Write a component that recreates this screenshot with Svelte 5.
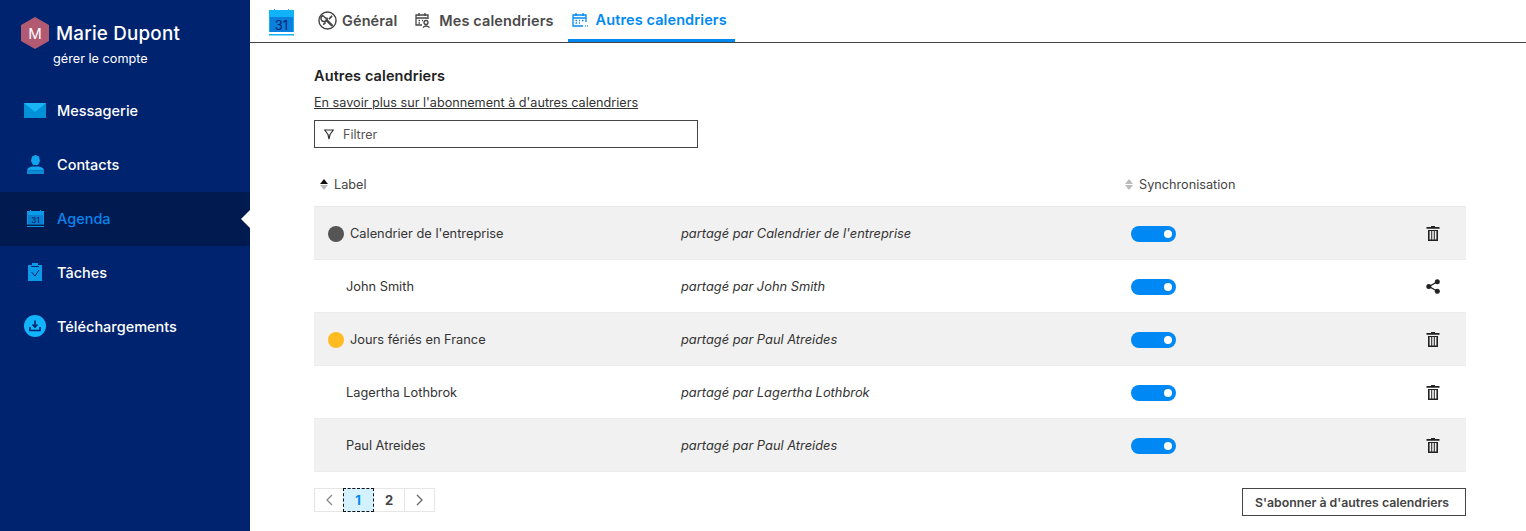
<script>
	const nav = [
		{ id: 'mail', label: 'Messagerie' },
		{ id: 'contacts', label: 'Contacts' },
		{ id: 'agenda', label: 'Agenda', active: true },
		{ id: 'tasks', label: 'Tâches' },
		{ id: 'downloads', label: 'Téléchargements' }
	];

	const rows = [
		{ name: "Calendrier de l'entreprise", owner: "Calendrier de l'entreprise", color: '#555555', action: 'trash' },
		{ name: 'John Smith', owner: 'John Smith', action: 'share' },
		{ name: 'Jours fériés en France', owner: 'Paul Atreides', color: '#ffbb22', action: 'trash' },
		{ name: 'Lagertha Lothbrok', owner: 'Lagertha Lothbrok', action: 'trash' },
		{ name: 'Paul Atreides', owner: 'Paul Atreides', action: 'trash' }
	];
</script>

<div class="page">
	<aside class="sidebar">
		<div class="account">
			<div class="who">
				<svg class="hex" width="28" height="32" viewBox="0 0 28 32">
					<path d="M14 0 L28 8 V24 L14 32 L0 24 V8 Z" fill="#b15a72" />
					<text x="14" y="21.500" text-anchor="middle" font-size="15" fill="#fff">M</text>
				</svg>
				<span class="name">Marie Dupont</span>
			</div>
			<div class="manage">gérer le compte</div>
		</div>
		<nav>
			{#each nav as item}
				<div class="nav-item" class:active={item.active}>
					<span class="nav-icon">
						{#if item.id === 'mail'}
							<svg width="22" height="15" viewBox="0 0 22 15">
								<path d="M0 0 H22 V15 H0 Z" fill="#0091d8" />
								<path d="M0 0 H22 L11 9 Z" fill="#19b5f5" />
							</svg>
						{:else if item.id === 'contacts'}
							<svg width="17" height="19" viewBox="0 0 17 19">
								<path d="M5 1.500 L8.500 0 L12 1.500 L13 6 L11 10 H6 L4 6 Z" fill="#12a5ee" />
								<path d="M0 15.500 Q0 12.500 5 11.500 H12 Q17 12.500 17 15.500 Z" fill="#12a5ee" />
								<path d="M0 15.500 H17 V19 H0 Z" fill="#0b8ad6" />
							</svg>
						{:else if item.id === 'agenda'}
							<svg width="17" height="17" viewBox="0 0 17 17">
								<path d="M0 1 H3 V0 H4 V1 H13 V0 H14 V1 H17 V14.500 H0 Z" fill="#0a9ae8" />
								<rect y="16" width="17" height="1" fill="#0a9ae8" />
								<rect x="1" y="5" width="15" height="9" fill="#0a7fd0" />
								<text x="8.500" y="13" text-anchor="middle" font-size="8" fill="#00236f">31</text>
							</svg>
						{:else if item.id === 'tasks'}
							<svg width="14" height="18" viewBox="0 0 14 18">
								<path d="M0 2 H4 V0 H10 V2 H14 V18 H0 Z" fill="#0a9ae8" />
								<path d="M3.500 9 L7 13 L11 7" fill="none" stroke="#00236f" stroke-width="1" />
								<rect x="3" y="3" width="8" height="1" fill="#00236f" />
							</svg>
						{:else}
							<svg width="22" height="22" viewBox="0 0 22 22">
								<circle cx="11" cy="11" r="11" fill="#12b5fb" />
								<path d="M11 5.500 V12 M8.500 9.500 L11 12 L13.500 9.500" fill="none" stroke="#00236f" stroke-width="1.600" />
								<path d="M6 12 V15.500 H16 V12" fill="none" stroke="#00236f" stroke-width="1.600" />
							</svg>
						{/if}
					</span>
					<span>{item.label}</span>
				</div>
			{/each}
		</nav>
	</aside>

	<main class="main">
		<header class="tabs">
			<svg class="logo" width="25" height="27" viewBox="0 0 25 27">
				<path d="M0 1 H5 V0 H6 V1 H19 V0 H20 V1 H25 V23 H0 Z" fill="#10b2f8" />
				<rect y="25" width="25" height="1.500" fill="#10b2f8" />
				<rect x="1" y="8" width="23" height="15" fill="#0a80dc" />
				<text x="12.500" y="21" text-anchor="middle" font-size="13" fill="#00236f">31</text>
			</svg>
			<div class="tab general">
				<svg width="19" height="19" viewBox="0 0 20 20" fill="none" stroke="#444" stroke-width="1.500">
					<circle cx="10" cy="10" r="9" />
					<path d="M5 4.800 A3.300 3.300 0 1 0 9.700 7.700 L8 7.500 L7 6.500 Z" stroke-linejoin="round" />
					<path d="M9 9.500 L14.500 15" stroke-width="2.600" stroke-linecap="round" />
					<path d="M14.800 5.200 L11.500 8.500 M5.500 14.500 L8 12" stroke-width="1.700" />
				</svg>
				Général
			</div>
			<div class="tab mine">
				<svg width="16" height="16" viewBox="0 0 16 16" fill="none" stroke="#444" stroke-width="1.300">
					<path d="M7 13 H1 V3 H13 V7 M1 6 H13 M4 1 V4 M10 1 V4" />
					<path d="M3.500 8.500 H5 M7 8.500 H8 M3.500 11 H5" />
					<circle cx="11" cy="10.500" r="2" />
					<path d="M8 15.500 Q11 12.500 14.500 15.500" />
				</svg>
				Mes calendriers
			</div>
			<div class="tab current">
				<svg width="16" height="16" viewBox="0 0 16 16" fill="none" stroke="#0089f0" stroke-width="1.300">
					<path d="M11 14 H1 V3 H14 V10 M1 6 H14 M4 1 V4 M11 1 V4" />
					<path d="M3.500 8.500 H5 M7 8.500 H8 M10 8.500 H11.500 M3.500 11 H5 M7 11 H8" />
					<path d="M13 14 H13.800 M15 14 H15.800" />
				</svg>
				Autres calendriers
			</div>
		</header>

		<section class="content">
			<h2>Autres calendriers</h2>
			<a class="learn" href="#top">En savoir plus sur l'abonnement à d'autres calendriers</a>
			<div class="filter">
				<svg width="10" height="11" viewBox="0 0 10 11" fill="none" stroke="#333" stroke-width="1.200">
					<path d="M0.700 1 H9.300 L6 5.500 L5 10 L4 5.500 Z" />
				</svg>
				<span>Filtrer</span>
			</div>

			<div class="table-head">
				<div class="col-label">
					<svg width="8" height="11" viewBox="0 0 8 11">
						<path d="M4 0 L8 5 H0 Z" fill="#111" />
						<path d="M4 11 L8 6 H0 Z" fill="#bbb" />
					</svg>
					Label
				</div>
				<div class="col-sync">
					<svg width="8" height="11" viewBox="0 0 8 11">
						<path d="M4 0 L8 5 H0 Z" fill="#bbb" />
						<path d="M4 11 L8 6 H0 Z" fill="#bbb" />
					</svg>
					Synchronisation
				</div>
			</div>

			{#each rows as row}
				<div class="row">
					<div class="cell-name" class:dotted={row.color}>
						{#if row.color}
							<span class="dot" style="background: {row.color}"></span>
						{/if}
						{row.name}
					</div>
					<div class="cell-owner">partagé par {row.owner}</div>
					<div class="cell-sync"><span class="toggle"></span></div>
					<div class="cell-action">
						{#if row.action === 'trash'}
							<svg width="14" height="15" viewBox="0 0 14 15">
								<path d="M5 1 V0 H9 V1 H13.500 V2.800 H0.500 V1 Z" fill="#222" />
								<path d="M2 4 H12 V15 H2 Z M3.600 5 V13.500 H5.200 V5 Z M6.200 5 V13.500 H7.800 V5 Z M8.800 5 V13.500 H10.400 V5 Z" fill="#222" fill-rule="evenodd" />
							</svg>
						{:else}
							<svg width="14" height="15" viewBox="0 0 14 15">
								<path d="M11 3 L3 7.500 L11 12" fill="none" stroke="#222" stroke-width="1.400" />
								<circle cx="11.300" cy="2.800" r="2.500" fill="#222" />
								<circle cx="2.800" cy="7.500" r="2.500" fill="#222" />
								<circle cx="11.300" cy="12.200" r="2.500" fill="#222" />
							</svg>
						{/if}
					</div>
				</div>
			{/each}

			<div class="foot">
				<div class="pager">
					<span class="page-btn arrow">
						<svg width="8" height="12" viewBox="0 0 8 12" fill="none" stroke="#888" stroke-width="1.300"><path d="M7 1 L2 6 L7 11" /></svg>
					</span>
					<span class="page-btn selected">1</span>
					<span class="page-btn two">2</span>
					<span class="page-btn arrow last">
						<svg width="8" height="12" viewBox="0 0 8 12" fill="none" stroke="#666" stroke-width="1.300"><path d="M1 1 L6 6 L1 11" /></svg>
					</span>
				</div>
				<button type="button">S'abonner à d'autres calendriers</button>
			</div>
		</section>
	</main>
</div>

<style>
	:global(body) {
		margin: 0;
		background: #fff;
	}
	.page {
		display: flex;
		height: 531px;
		overflow: hidden;
		font-family: Inter, "Open Sans", sans-serif;
		color: #333;
	}
	.sidebar {
		width: 250px;
		flex: none;
		background: #00236f;
		color: #fff;
	}
	.account {
		padding: 17px 0 0 21px;
		height: 67px;
	}
	.who {
		display: flex;
		align-items: center;
		gap: 7px;
	}
	.hex {
		flex: none;
	}
	.hex text {
		font-family: Inter, sans-serif;
	}
	.name {
		font-size: 18.800px;
		font-weight: 500;
		letter-spacing: 0.2px;
	}
	.manage {
		font-size: 12.700px;
		margin: 2px 0 0 32px;
	}
	.nav-item {
		display: flex;
		align-items: center;
		height: 54px;
		box-sizing: border-box;
		padding-bottom: 2px;
		font-size: 14.500px;
		font-weight: 500;
		position: relative;
	}
	.nav-icon {
		width: 22px;
		margin: 0 11px 0 24px;
		display: flex;
		justify-content: center;
		flex: none;
	}
	.nav-icon svg {
		display: block;
	}
	.nav-item.active {
		background: #011a4f;
		color: #0a85ee;
	}
	.nav-item.active::after {
		content: '';
		position: absolute;
		right: 0;
		top: 50%;
		margin-top: -9px;
		border: 9px solid transparent;
		border-right-color: #fff;
		border-left-width: 0;
	}
	.main {
		flex: 1;
		min-width: 0;
	}
	.tabs {
		display: flex;
		align-items: stretch;
		height: 42px;
		border-bottom: 1px solid #444;
		padding-left: 19px;
	}
	.logo {
		align-self: flex-start;
		margin: 9px 20px 0 0;
	}
	.tab {
		display: flex;
		align-items: center;
		gap: 8px;
		font-size: 14.500px;
		letter-spacing: 0.1px;
		font-weight: 600;
		color: #4a4a4a;
		padding: 0 8px 2px 4px;
		box-sizing: border-box;
		height: 42px;
	}
	.general {
		gap: 5px;
		margin-right: 6px;
	}
	.mine {
		margin-right: 6px;
	}
	.tab.current {
		color: #0089f0;
		border-bottom: 3px solid #0089f0;
		padding-bottom: 0;
	}
	.content {
		padding: 0 60px 0 64px;
	}
	h2 {
		font-size: 14.500px;
		letter-spacing: 0.1px;
		font-weight: 600;
		color: #222;
		margin: 0;
		padding-top: 24px;
		line-height: 17px;
	}
	.learn {
		display: block;
		font-size: 12.650px;
		color: #333;
		margin-top: 11px;
		line-height: 16px;
	}
	.filter {
		display: flex;
		align-items: center;
		gap: 9px;
		width: 384px;
		height: 28px;
		box-sizing: border-box;
		border: 1px solid #444;
		padding-left: 9px;
		margin-top: 9px;
		font-size: 12.500px;
		color: #555;
	}
	.table-head {
		display: flex;
		align-items: center;
		height: 59px;
		padding: 14px 0 0 6px;
		box-sizing: border-box;
		border-bottom: 1px solid #e8e8e8;
		font-size: 12.700px;
		color: #444;
	}
	.col-label {
		width: 805px;
		display: flex;
		align-items: center;
		gap: 6px;
	}
	.col-sync {
		display: flex;
		align-items: center;
		gap: 6px;
	}
	.row {
		display: grid;
		grid-template-columns: 367px 450px 1fr 40px;
		align-items: center;
		height: 53px;
		padding-top: 1px;
		font-size: 12.800px;
		color: #333;
		border-bottom: 1px solid #ececec;
		box-sizing: border-box;
	}
	.row:nth-of-type(odd) {
		background: #f1f1f1;
	}
	.cell-name {
		display: flex;
		align-items: center;
		gap: 6px;
		padding-left: 32px;
	}
	.cell-name.dotted {
		padding-left: 14px;
	}
	.dot {
		width: 16px;
		height: 16px;
		border-radius: 50%;
		flex: none;
	}
	.cell-owner {
		font-style: italic;
		font-size: 12.850px;
	}
	.toggle {
		display: block;
		width: 45px;
		height: 16px;
		border-radius: 8px;
		background: #0089f5;
		position: relative;
	}
	.toggle::after {
		content: '';
		position: absolute;
		right: 4px;
		top: 4px;
		width: 8px;
		height: 8px;
		border-radius: 50%;
		background: #fff;
	}
	.cell-action svg {
		display: block;
	}
	.foot {
		display: flex;
		justify-content: space-between;
		align-items: flex-start;
		margin-top: 16px;
	}
	.pager {
		display: flex;
		height: 24px;
		border: 1px solid #e6e6e6;
		box-sizing: border-box;
		font-size: 13px;
		font-weight: 700;
		color: #444;
	}
	.page-btn {
		width: 28px;
		display: flex;
		align-items: center;
		justify-content: center;
		box-sizing: border-box;
		height: 22px;
	}
	.page-btn.two {
		width: 30px;
	}
	.page-btn.last {
		width: 30px;
		border-left: 1px solid #e6e6e6;
	}
	.page-btn.selected {
		width: 31px;
		height: 24px;
		margin-top: -1px;
		padding-right: 1px;
		background: #d3f1ff;
		color: #0089f0;
		border: 1px dashed #111;
	}
	button {
		width: 224px;
		height: 28px;
		background: #fff;
		border: 1px solid #444;
		border-radius: 0;
		font-family: inherit;
		font-size: 12.300px;
		font-weight: 600;
		color: #444;
		padding: 0 4px 0 0;
	}
</style>
